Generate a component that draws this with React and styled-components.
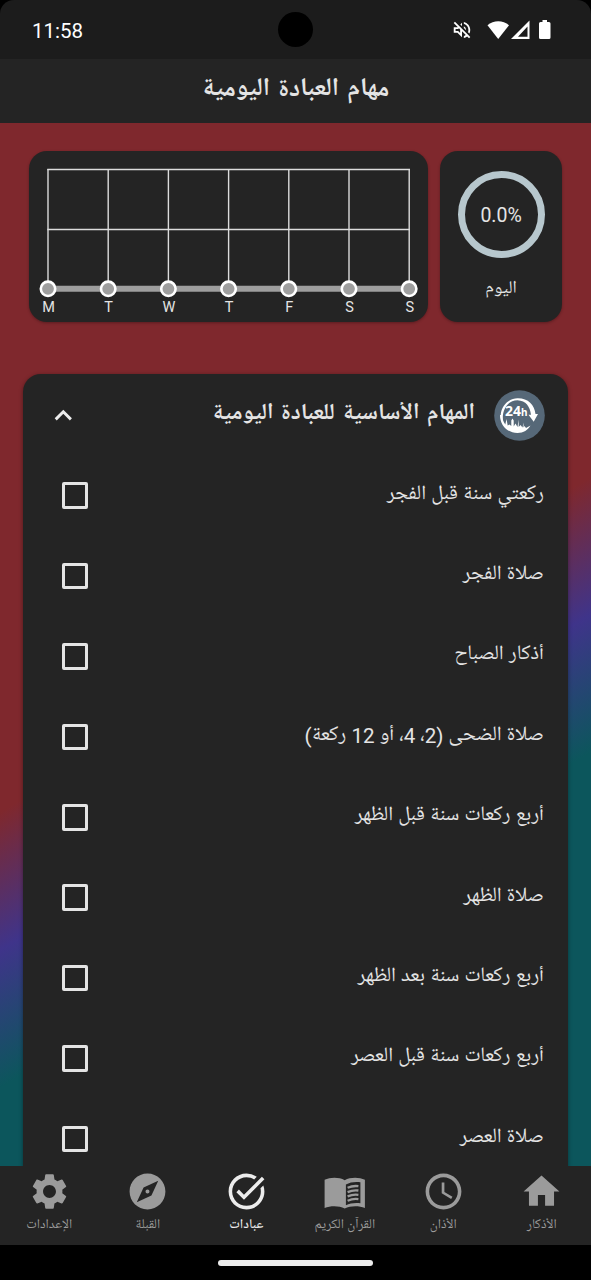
import React from 'react';
import styled, { createGlobalStyle } from 'styled-components';
import {
  MdAccessTime,
  MdExplore,
  MdHome,
  MdOutlineVolumeOff,
  MdSettings,
  MdTaskAlt,
} from 'react-icons/md';

const COLORS = {
  ACTIVE: '#ececec',
  MUTED: '#9b9b9b',
  RING: '#b7c7cd',
  SURFACE: '#242424',
  TEXT: '#e4e4e4',
};

const GlobalStyle = createGlobalStyle`
  * {
    box-sizing: border-box;
  }

  body {
    background: #000;
    margin: 0;
  }
`;

const Screen = styled.div`
  color: ${COLORS.TEXT};
  direction: rtl;
  display: flex;
  flex-direction: column;
  font-family: Roboto, 'Noto Naskh Arabic UI', 'Noto Naskh Arabic',
    'Noto Sans Arabic', 'DejaVu Sans', sans-serif;
  height: 1280px;
  overflow: hidden;
  width: 591px;
`;

const StatusBar = styled.div`
  align-items: center;
  background: #1c1c1c;
  border-radius: 14px 14px 0 0;
  color: #fff;
  direction: ltr;
  display: grid;
  flex: none;
  grid-template-columns: 1fr 35px 1fr;
  height: 59px;
  padding: 0 39px 0 32px;
`;

const Time = styled.span`
  font-size: 20.5px;
  padding-top: 2px;
`;

const Camera = styled.div`
  background: #000;
  border-radius: 50%;
  height: 35px;
  margin-left: 3.5px;
  width: 35px;
`;

const StatusIcons = styled.div`
  align-items: center;
  display: flex;
  gap: 13px;
  justify-content: flex-end;
`;

const Header = styled.header`
  align-items: center;
  background: ${COLORS.SURFACE};
  display: flex;
  flex: none;
  height: 64px;
  justify-content: center;
  padding-bottom: 2px;
`;

const Title = styled.h1`
  font-size: 25.4px;
  font-weight: 700;
  line-height: 40px;
  margin: 0;
  word-spacing: 2px;
`;

const Content = styled.main`
  background: linear-gradient(
    150.46deg,
    #7f282d 50%,
    #3f348a 60%,
    #0c565c 70%
  );
  flex: none;
  height: 1043px;
  overflow: hidden;
  padding: 28px 23px 0;
`;

const Stats = styled.div`
  direction: ltr;
  display: flex;
  gap: 12px;
  height: 171px;
  margin: 0 6px 52px;
`;

const Card = styled.section`
  background: ${COLORS.SURFACE};
  border-radius: 18px;
  box-shadow: 0 1px 3px rgba(0, 0, 0, 0.3);
  width: ${({ $width }) => $width}px;
`;

const TodayCard = styled(Card)`
  align-items: center;
  display: flex;
  flex-direction: column;
  padding-top: 19.5px;
`;

const Ring = styled.div`
  align-items: center;
  border: 7.5px solid ${COLORS.RING};
  border-radius: 50%;
  display: flex;
  font-size: 19.5px;
  height: 87px;
  justify-content: center;
  padding-top: 2px;
  width: 87px;
`;

const TodayLabel = styled.span`
  font-size: 17.8px;
  line-height: 24px;
  margin-top: 19px;
`;

const Panel = styled.section`
  background: ${COLORS.SURFACE};
  border-radius: 18px 18px 0 0;
  box-shadow: 0 1px 4px rgba(0, 0, 0, 0.4);
  height: 900px;
`;

const PanelHeader = styled.div`
  align-items: center;
  display: flex;
  height: 81.5px;
  padding: 1px 23px 0 29px;
`;

const PanelTitle = styled.h2`
  flex: 1;
  font-size: 22.8px;
  font-weight: 700;
  line-height: 36px;
  margin: 0 19px 0 0;
  word-spacing: 2px;
`;

const Task = styled.label`
  align-items: center;
  display: flex;
  height: 80.4px;
  justify-content: space-between;
  padding: 0 24px 0 38.5px;
`;

const TaskName = styled.span`
  font-size: 20.6px;
  padding-bottom: 4px;
`;

const Checkbox = styled.span`
  border: 3px solid ${COLORS.TEXT};
  border-radius: 2px;
  height: 26.5px;
  width: 26.5px;
`;

const Nav = styled.nav`
  background: ${COLORS.SURFACE};
  display: grid;
  flex: none;
  grid-template-columns: repeat(6, 1fr);
  height: 79px;
`;

const NavItem = styled.div`
  align-items: center;
  color: ${({ $active }) => ($active ? COLORS.ACTIVE : COLORS.MUTED)};
  display: flex;
  flex-direction: column;
  font-size: 13.5px;
  font-weight: ${({ $active }) => ($active ? 500 : 400)};
  gap: 2px;
  line-height: 20px;
  padding-top: 3.5px;
  white-space: nowrap;
`;

const GestureBar = styled.div`
  align-items: center;
  background: #000;
  display: flex;
  flex: 1;
  justify-content: center;
`;

const Handle = styled.div`
  background: #ececec;
  border-radius: 3px;
  height: 6px;
  width: 155px;
`;

const BookIcon = ({ size }) => (
  <svg height={size} viewBox="0 0 43 43" width={size}>
    <path
      d="M1.6 9.8C7.5 7 16 7 21.7 10.2 27.5 7 36 7 41.9 9.8V38C36 35.7 27.5 35.7 21.7 38.4 16 35.7 7.5 35.7 1.6 38ZM22.9 14.5V35.3C27 33.2 32 32.5 37.4 33.2V12.3C32 11.6 27 12.3 22.9 14.5Z"
      fill="currentColor"
      fillRule="evenodd"
    />
    <path
      d="M24.6 17.8Q30 15.4 35.4 16.2M24.6 22.1Q30 19.7 35.4 20.5M24.6 26.4Q30 24 35.4 24.8M24.6 30.7Q30 28.3 35.4 29.1"
      fill="none"
      stroke="currentColor"
      strokeWidth="2.3"
    />
  </svg>
);

const DAYS = ['M', 'T', 'W', 'T', 'F', 'S', 'S'];

const TASKS = [
  'ركعتي سنة قبل الفجر',
  'صلاة الفجر',
  'أذكار الصباح',
  'صلاة الضحى (2، 4، أو 12 ركعة)',
  'أربع ركعات سنة قبل الظهر',
  'صلاة الظهر',
  'أربع ركعات سنة بعد الظهر',
  'أربع ركعات سنة قبل العصر',
  'صلاة العصر',
];

const TABS = [
  { icon: MdHome, label: 'الأذكار' },
  { icon: MdAccessTime, label: 'الأذان' },
  { icon: BookIcon, label: 'القرآن الكريم' },
  { active: true, icon: MdTaskAlt, label: 'عبادات' },
  { icon: MdExplore, label: 'القبلة' },
  { icon: MdSettings, label: 'الإعدادات' },
];

const dayX = (index) => 19 + index * 60.2;

const WeekChart = () => (
  <svg height="171" viewBox="0 0 399 171" width="399">
    <g stroke="#dcdcdc" strokeWidth="1.4">
      <path d="M18.3 18.5H381M18.3 78.5H381" />
      {DAYS.map((day, index) => (
        <path d={`M${dayX(index)} 18V137`} key={dayX(index)} />
      ))}
    </g>
    <path d="M19 137.8H380" stroke="#9e9e9e" strokeWidth="6" />
    {DAYS.map((day, index) => (
      <g key={dayX(index)}>
        <circle
          cx={dayX(index)}
          cy="137.8"
          fill="#9e9e9e"
          r="7.2"
          stroke="#fff"
          strokeWidth="2.6"
        />
        <text
          fill={COLORS.TEXT}
          fontSize="14.5"
          textAnchor="middle"
          x={dayX(index) + 0.5}
          y="160.5"
        >
          {day}
        </text>
      </g>
    ))}
  </svg>
);

const DayBadge = () => (
  <svg height="51" viewBox="0 0 51 51" width="51">
    <circle cx="25.5" cy="25.5" fill="#566878" r="25.3" />
    <path
      d="M9.5 35A18 17.5 0 0 1 23.5 8.2C34 8 40.500 14.500 41.500 24H44L39.700 31.800 34.500 24.800H37C36 16.500 32 10.6 23.5 10.2 13 10.2 6.500 21 9.5 35Z"
      fill="#fff"
    />
    <path
      d="M6 25C6 35 13 43 23.5 43 29.5 43 34 40 36.5 35.5L32 38 30.5 36 29.5 37.500V32.5L28.5 37.500 26.5 35 24.7 37V29.5L23.5 37 21.5 33.500 19.7 36.5V30.500L18.5 28.5 17.3 30.5V36L15.5 34.5 13.7 35.5 12.5 29 11.3 34.5C9 31 8 28 8 25Z"
      fill="#fff"
    />
    <text
      direction="ltr"
      fill="#fff"
      fontFamily="Noto Sans, sans-serif"
      fontSize="14"
      fontWeight="700"
      x="11"
      y="25.5"
    >
      24<tspan fontSize="10">h</tspan>
    </text>
  </svg>
);

const Chevron = () => (
  <svg height="22" viewBox="0 0 22 22" width="22">
    <path
      d="M3.7 15.4L11.3 7.8L18.9 15.4"
      fill="none"
      stroke={COLORS.ACTIVE}
      strokeWidth="2.9"
    />
  </svg>
);

const SignalIcons = () => (
  <svg height="22" viewBox="0 0 66 22" width="66">
    <g fill="#fff">
      <path d="M1.5 6.2C7.5 .8 17 .8 23 6.2L12.2 20Z" />
      <path
        d="M25 20L43.5 1.5V20ZM32 17.8H41.5V7.5Z"
        fillRule="evenodd"
      />
      <path d="M56.5 1h4.5v2h2q1.5 0 1.5 1.5v14q0 1.5-1.5 1.5h-8.5q-1.5 0-1.5-1.5v-14q0-1.5 1.5-1.5h2z" />
    </g>
  </svg>
);

const App = () => (
  <Screen>
    <GlobalStyle />
    <StatusBar>
      <Time>11:58</Time>
      <Camera />
      <StatusIcons>
        <MdOutlineVolumeOff size={22} />
        <SignalIcons />
      </StatusIcons>
    </StatusBar>
    <Header>
      <Title>مهام العبادة اليومية</Title>
    </Header>
    <Content>
      <Stats>
        <Card $width={399.5}>
          <WeekChart />
        </Card>
        <TodayCard $width={122}>
          <Ring>0.0%</Ring>
          <TodayLabel>اليوم</TodayLabel>
        </TodayCard>
      </Stats>
      <Panel>
        <PanelHeader>
          <DayBadge />
          <PanelTitle>المهام الأساسية للعبادة اليومية</PanelTitle>
          <Chevron />
        </PanelHeader>
        {TASKS.map((task) => (
          <Task key={task}>
            <TaskName>{task}</TaskName>
            <Checkbox />
          </Task>
        ))}
      </Panel>
    </Content>
    <Nav>
      {TABS.map(({ active, icon: Icon, label }) => (
        <NavItem $active={active} key={label}>
          <Icon size={43} />
          {label}
        </NavItem>
      ))}
    </Nav>
    <GestureBar>
      <Handle />
    </GestureBar>
  </Screen>
);

export default App;
